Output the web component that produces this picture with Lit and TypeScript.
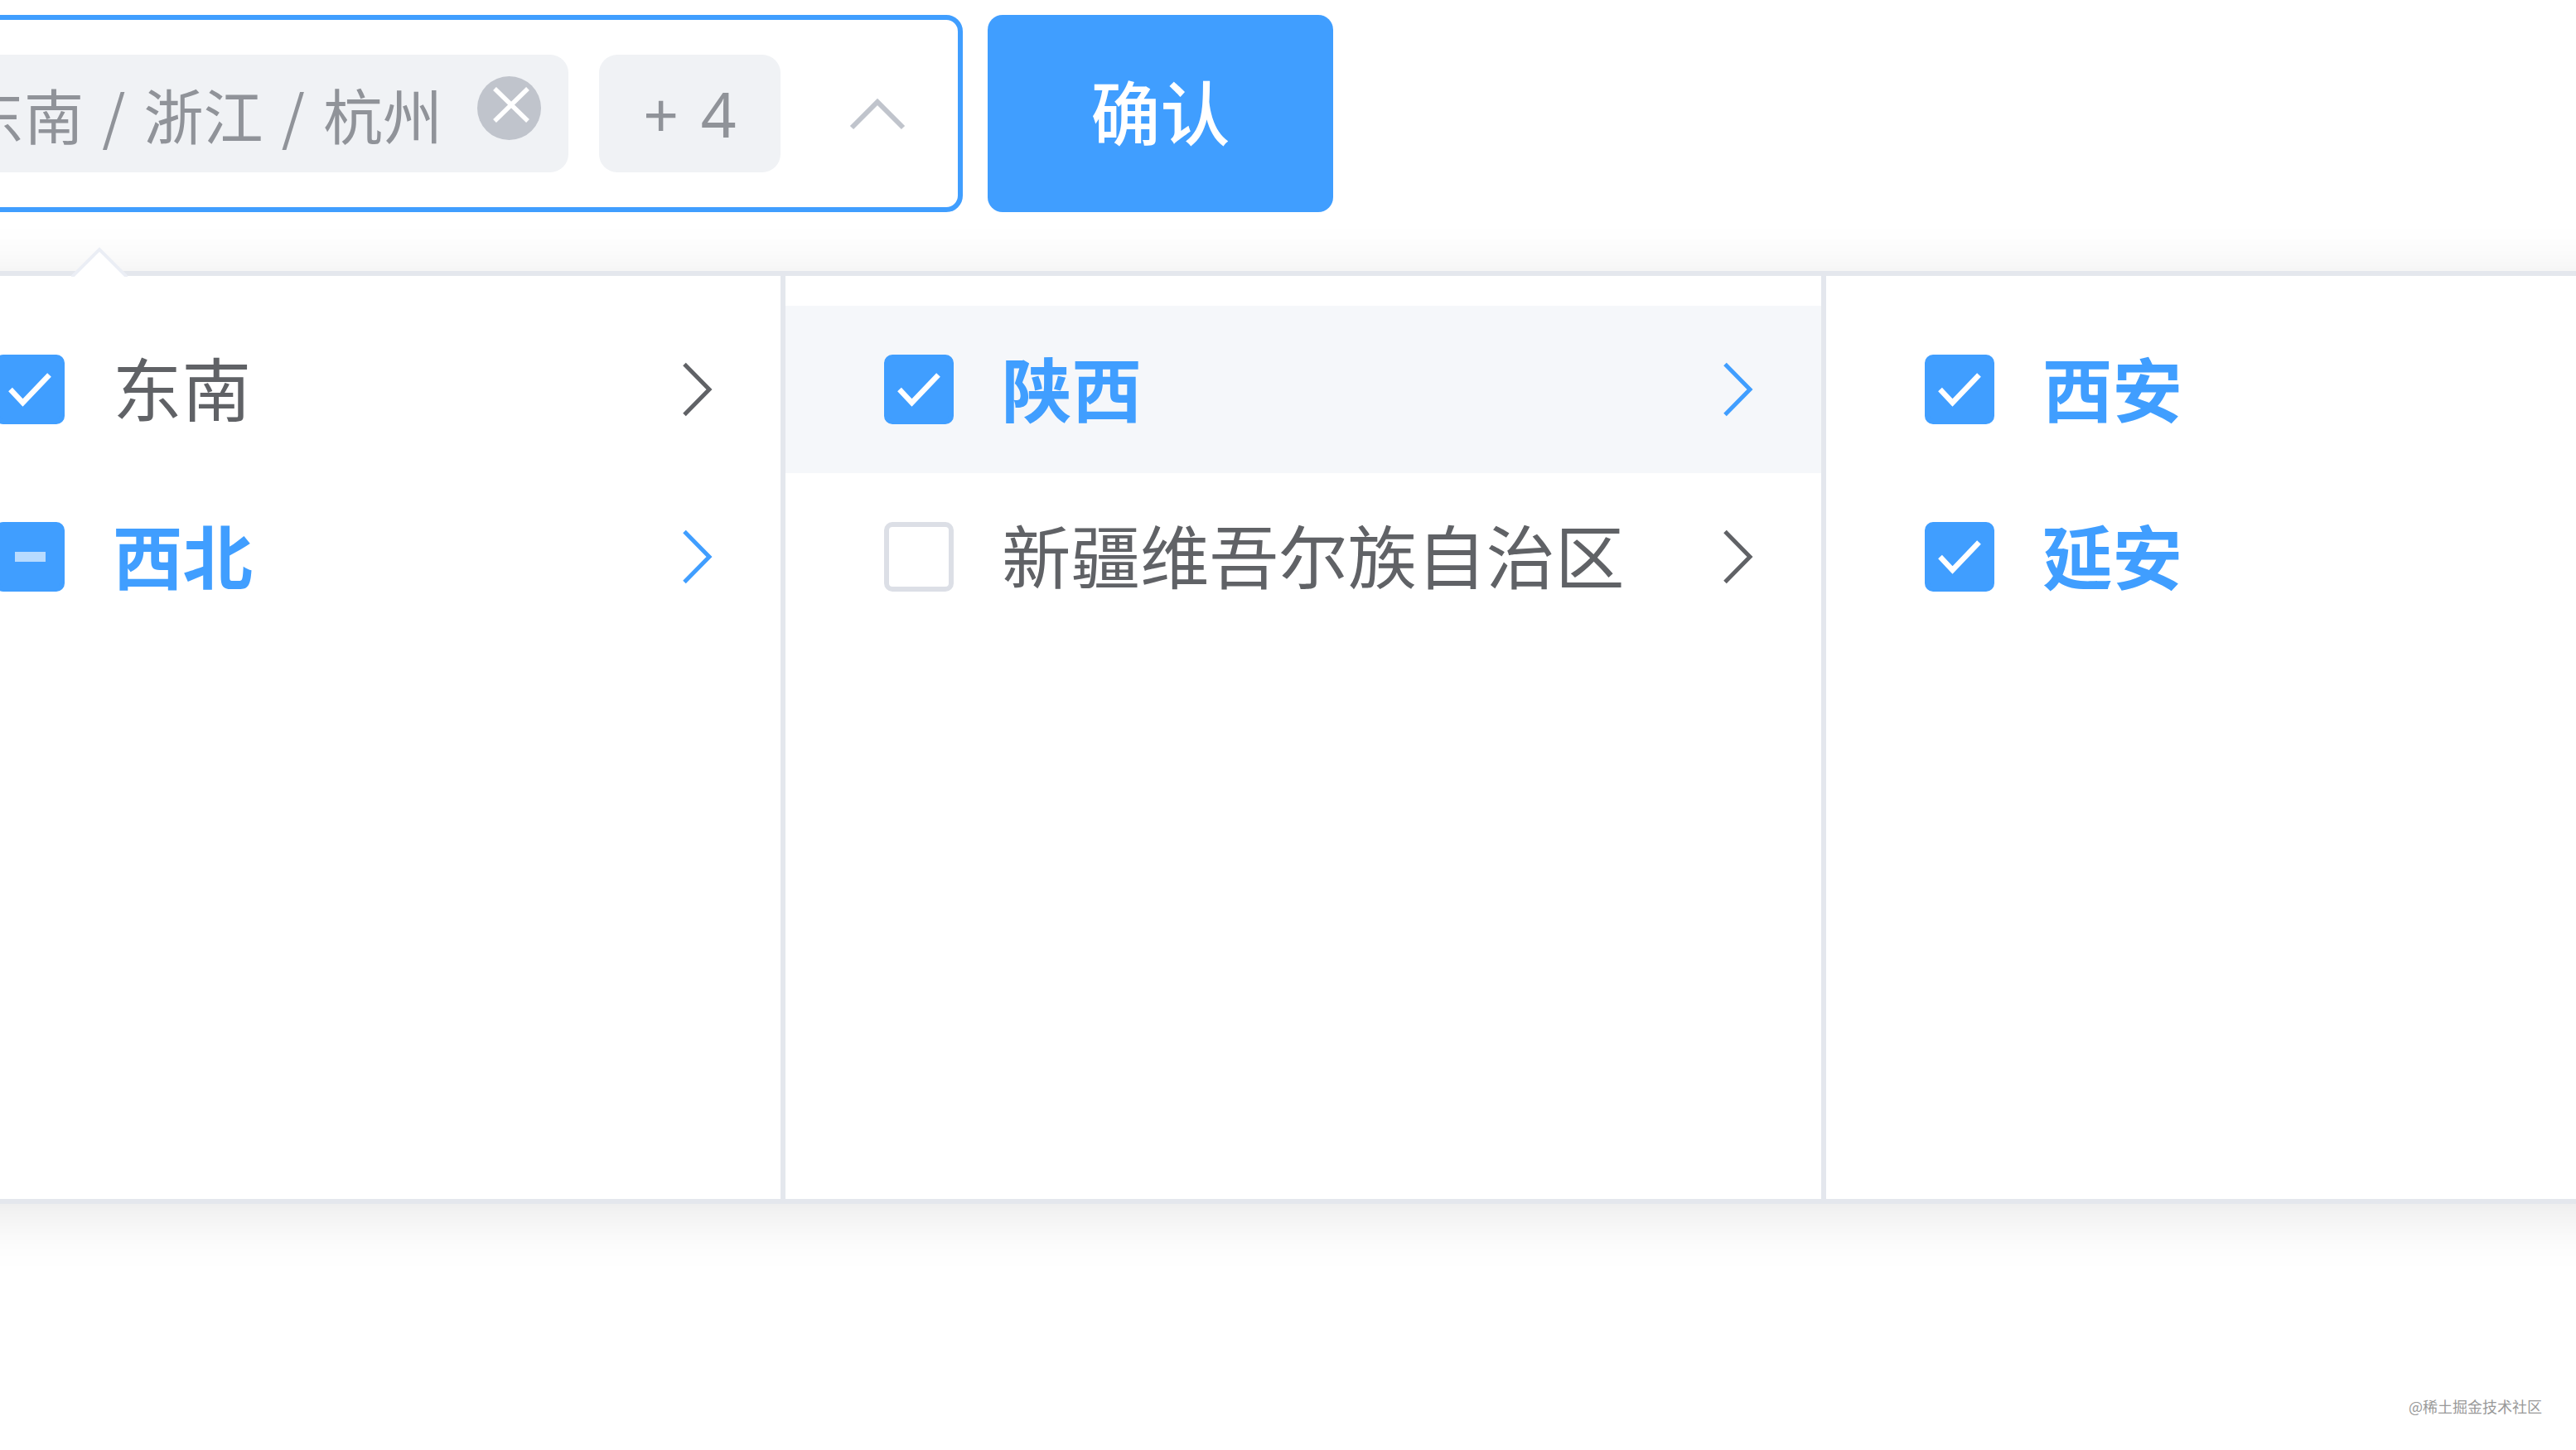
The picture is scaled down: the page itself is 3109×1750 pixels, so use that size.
import { html, css, svg, nothing, LitElement } from 'lit';
import { customElement, property } from 'lit/decorators.js';
import { classMap } from 'lit/directives/class-map.js';

type CheckState = 'checked' | 'indeterminate' | 'none';

interface CascaderNode {
  label: string;
  state: CheckState;
  inPath?: boolean;
  hovered?: boolean;
  leaf?: boolean;
}

const MENUS: CascaderNode[][] = [
  [
    { label: '东南', state: 'checked' },
    { label: '西北', state: 'indeterminate', inPath: true },
  ],
  [
    { label: '陕西', state: 'checked', inPath: true, hovered: true },
    { label: '新疆维吾尔族自治区', state: 'none' },
  ],
  [
    { label: '西安', state: 'checked', inPath: true, leaf: true },
    { label: '延安', state: 'checked', inPath: true, leaf: true },
  ],
];

@customElement('cascader-checkbox')
export class CascaderCheckbox extends LitElement {
  static styles = css`
    :host {
      display: block;
      flex: none;
      width: 84px;
      height: 84px;
    }

    .box {
      box-sizing: border-box;
      width: 84px;
      height: 84px;
      border: 6px solid #dcdfe6;
      border-radius: 10px;
      background: #fff;
    }

    .box--filled {
      border-color: #409eff;
      background: #409eff;
    }

    .mark {
      display: block;
      width: 72px;
      height: 72px;
      fill: none;
      stroke: #fff;
      stroke-width: 6.5;
    }

    .dash {
      stroke: #b8dbff;
      stroke-width: 12;
    }
  `;

  @property({ type: String }) state: CheckState = 'none';

  render() {
    return html`
      <div class=${classMap({ box: true, 'box--filled': this.state !== 'none' })}>
        ${this.state === 'none' ? nothing : html`
          <svg class="mark" viewBox="6 6 72 72">
            ${this.state === 'checked'
              ? svg`<path d="M18.5 42 L33.5 58 L65.5 24.5" />`
              : svg`<path class="dash" d="M24 42 H61" />`}
          </svg>
        `}
      </div>
    `;
  }
}

@customElement('cascader-node')
export class CascaderNodeItem extends LitElement {
  static styles = css`
    :host {
      display: block;
    }

    .node {
      display: flex;
      align-items: center;
      box-sizing: border-box;
      height: 202px;
      padding: 0 82px 0 119px;
      color: #606266;
      font-size: 83.5px;
      line-height: 194px;
    }

    .node--hovered {
      background: #f5f7fa;
    }

    .node--path {
      color: #409eff;
      font-size: 84.5px;
      font-weight: 700;
    }

    .label {
      flex: 1;
      height: 202px;
      padding-left: 58px;
      white-space: nowrap;
    }

    .arrow {
      flex: none;
      width: 40px;
      height: 68px;
      fill: none;
      stroke: currentColor;
      stroke-width: 5;
    }
  `;

  @property({ attribute: false }) node!: CascaderNode;

  render() {
    const { label, state, inPath, hovered, leaf } = this.node;
    return html`
      <div class=${classMap({ node: true, 'node--path': !!inPath, 'node--hovered': !!hovered })}>
        <cascader-checkbox .state=${state}></cascader-checkbox>
        <span class="label">${label}</span>
        ${leaf ? nothing : html`
          <svg class="arrow" viewBox="0 0 40 68">
            <path d="M6 3.5 L36 34 L6 64.5" />
          </svg>
        `}
      </div>
    `;
  }
}

@customElement('app-root')
export class AppRoot extends LitElement {
  static styles = css`
    :host {
      display: block;
      font-family: 'Noto Sans CJK SC', sans-serif;
    }

    .page {
      display: flex;
      flex-direction: column;
      box-sizing: border-box;
      width: 3109px;
      height: 1750px;
      padding-top: 18px;
      overflow: hidden;
      background: #fff;
    }

    .toolbar {
      display: flex;
      gap: 30px;
      margin-left: -131px;
    }

    .input {
      display: flex;
      align-items: center;
      justify-content: flex-end;
      box-sizing: border-box;
      width: 1293px;
      height: 238px;
      padding-right: 63px;
      border: 6px solid #409eff;
      border-radius: 20px;
    }

    .tag {
      display: flex;
      align-items: center;
      flex: none;
      box-sizing: border-box;
      height: 142px;
      margin-right: 37px;
      padding: 0 33px 0 48px;
      border-radius: 22px;
      background: #f0f2f5;
      color: #909399;
      font-size: 72px;
      line-height: 142px;
      word-spacing: 6px;
      white-space: nowrap;
    }

    .tag--count {
      width: 219px;
      margin-right: 83px;
      padding: 0;
      justify-content: center;
      font-family: 'Noto Sans', sans-serif;
      font-size: 75px;
      word-spacing: 7px;
    }

    .close {
      width: 77px;
      height: 77px;
      margin: -13px 0 0 42px;
    }

    .close-disc {
      fill: #c0c4cc;
    }

    .close-cross {
      fill: none;
      stroke: #fff;
      stroke-width: 5.5;
    }

    .caret {
      flex: none;
      width: 68px;
      height: 44px;
      fill: none;
      stroke: #c0c4cc;
      stroke-width: 6;
    }

    .confirm {
      width: 417px;
      height: 238px;
      padding: 0 0 9px;
      border: 0;
      border-radius: 18px;
      background: #409eff;
      color: #fff;
      font-family: inherit;
      font-size: 84px;
      font-weight: 500;
      line-height: 229px;
    }

    .popper {
      position: relative;
      flex: none;
      box-sizing: border-box;
      width: 3600px;
      height: 1126px;
      margin: 71px 0 0 -131px;
      border: 6px solid #e4e7ed;
      border-radius: 24px;
      background: #fff;
      box-shadow: 0 12px 72px rgba(0, 0, 0, 0.1);
    }

    .popper-arrow {
      position: absolute;
      top: -37px;
      left: 211px;
      width: 68px;
      height: 38px;
      fill: #fff;
      stroke: #ebeef5;
      stroke-width: 4;
    }

    .menus {
      display: grid;
      grid-template-columns: 1073px 1256px 1fr;
      height: 100%;
    }

    .menu {
      box-sizing: border-box;
      padding-top: 36px;
      border-right: 6px solid #e4e7ed;
    }

    .menu:last-child {
      border-right: 0;
    }

    .watermark {
      align-self: flex-end;
      margin: auto 41px 40px 0;
      color: #999;
      font-size: 18px;
      line-height: 26px;
    }
  `;

  render() {
    return html`
      <div class="page">
        <div class="toolbar">
          <div class="input">
            <span class="tag">
              东南 / 浙江 / 杭州
              <svg class="close" viewBox="0 0 77 77">
                <circle class="close-disc" cx="38.5" cy="38.5" r="38.5" />
                <path class="close-cross" d="M21 15 L61 54 M61 15 L21 54" />
              </svg>
            </span>
            <span class="tag tag--count">+ 4</span>
            <svg class="caret" viewBox="0 0 68 44">
              <path d="M3 39 L34 8 L65 39" />
            </svg>
          </div>
          <button class="confirm" type="button">确认</button>
        </div>
        <div class="popper">
          <svg class="popper-arrow" viewBox="0 0 68 38">
            <path d="M-1 40 L34 5 L69 40" />
          </svg>
          <div class="menus">
            ${MENUS.map((nodes) => html`
              <div class="menu">
                ${nodes.map((node) => html`<cascader-node .node=${node}></cascader-node>`)}
              </div>
            `)}
          </div>
        </div>
        <div class="watermark">@稀土掘金技术社区</div>
      </div>
    `;
  }
}

declare global {
  interface HTMLElementTagNameMap {
    'app-root': AppRoot
    'cascader-node': CascaderNodeItem
    'cascader-checkbox': CascaderCheckbox
  }
}
